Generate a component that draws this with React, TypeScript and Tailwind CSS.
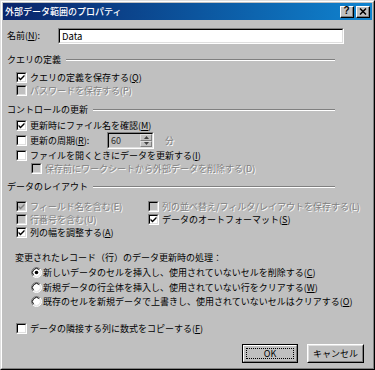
import React from 'react'

const font = '[font-family:"Noto_Sans_CJK_JP","Noto_Sans",sans-serif]'
const dis = 'text-[#808080] [text-shadow:1px_1px_0_#fff]'

type BoxProps = { checked?: boolean; disabled?: boolean }

const CheckBox: React.FC<BoxProps> = ({ checked, disabled }) => (
  <span className="block w-[11px] h-[11px] shrink-0 border border-t-[#808080] border-l-[#808080] border-b-white border-r-white">
    <span
      className={`block w-full h-full border border-t-black border-l-black border-b-[#dfdfdf] border-r-[#dfdfdf] ${
        disabled ? 'bg-[#c0c0c0]' : 'bg-white'
      }`}
    >
      {checked && (
        <svg viewBox="0 0 7 7" className="block w-[7px] h-[7px]">
          <polygon points="0.5,2.5 2.5,4.5 6.5,0.5 6.5,2.5 2.5,6.5 0.5,4.5" fill={disabled ? '#808080' : '#000'} />
        </svg>
      )}
    </span>
  </span>
)

const Radio: React.FC<{ checked?: boolean }> = ({ checked }) => (
  <svg viewBox="0 0 11 11" className="block w-[11px] h-[11px] shrink-0">
    <circle cx="5.5" cy="5.5" r="4.5" fill="#fff" />
    <path d="M1.96 9.04 A5 5 0 0 1 9.04 1.96" stroke="#808080" fill="none" />
    <path d="M9.04 1.96 A5 5 0 0 1 1.96 9.04" stroke="#fff" fill="none" />
    <path d="M2.67 8.33 A4 4 0 0 1 8.33 2.67" stroke="#000" fill="none" />
    <path d="M8.33 2.67 A4 4 0 0 1 2.67 8.33" stroke="#dfdfdf" fill="none" />
    {checked && <circle cx="5.5" cy="5.5" r="1.8" fill="#000" />}
  </svg>
)

const Header: React.FC<{ text: string }> = ({ text }) => (
  <div className="flex items-center w-[328px] h-[14px]">
    <span className="leading-[14px]">{text}</span>
    <div className="flex-1 ml-[5px] h-[2px] border-t border-t-[#808080] border-b border-b-white" />
  </div>
)

const CheckRow: React.FC<{
  checked?: boolean
  disabled?: boolean
  children: React.ReactNode
  className?: string
}> = ({ checked, disabled, children, className }) => (
  <div className={`flex items-center h-[13px] ${className ?? ''}`}>
    <CheckBox checked={checked} disabled={disabled} />
    <span className={`ml-[3px] leading-[13px] whitespace-nowrap ${disabled ? dis : ''}`}>{children}</span>
  </div>
)

const RadioRow: React.FC<{ checked?: boolean; children: React.ReactNode }> = ({ checked, children }) => (
  <div className="flex items-center h-[14px] pl-[24px]">
    <Radio checked={checked} />
    <span className="ml-[1px] leading-[13px] whitespace-nowrap">{children}</span>
  </div>
)

const TitleButton: React.FC<{ children: React.ReactNode }> = ({ children }) => (
  <div className="w-[14px] h-[12px] bg-[#c0c0c0] border border-t-white border-l-white border-b-black border-r-black">
    <div className="w-full h-full border-b border-r border-b-[#808080] border-r-[#808080] flex items-center justify-center">
      {children}
    </div>
  </div>
)

export default function App() {
  return (
    <div className={`w-[375px] h-[370px] bg-[#c0c0c0] text-black text-[9px] ${font}`}>
      <div className="w-full h-full border border-t-[#dfdfdf] border-l-[#dfdfdf] border-b-black border-r-black">
        <div className="w-full h-full border border-t-white border-l-white border-b-[#808080] border-r-[#808080] p-[1px] flex flex-col">
          {/* title bar */}
          <div className="h-[17px] bg-linear-to-r from-[#0a246a] to-[#1084d0] flex items-center pl-[2px] pr-[2px]">
            <span className="text-white font-medium leading-[17px] flex-1">外部データ範囲のプロパティ</span>
            <div className="flex gap-[2px]">
              <TitleButton>
                <span className="text-[10px] font-bold leading-none text-black [font-family:'Liberation_Sans',sans-serif]">?</span>
              </TitleButton>
              <TitleButton>
                <svg viewBox="0 0 8 7" className="w-[8px] h-[7px]">
                  <path d="M1 0.5 L7 6.5 M7 0.5 L1 6.5" stroke="#000" strokeWidth="1.5" />
                </svg>
              </TitleButton>
            </div>
          </div>

          <div className="flex flex-col pl-[4px]">
            {/* name */}
            <div className="flex items-center mt-[8px] h-[16px]">
              <span className="w-[51px] leading-[14px]">
                名前(<u>N</u>):
              </span>
              <div className="w-[286px] h-[16px] border border-t-[#808080] border-l-[#808080] border-b-white border-r-white">
                <div className="w-full h-full border border-t-black border-l-black border-b-[#dfdfdf] border-r-[#dfdfdf] bg-white flex items-center pl-[2px]">
                  <span className="leading-[12px] text-[9.5px]">Data</span>
                </div>
              </div>
            </div>

            <div className="mt-[9px]">
              <Header text="クエリの定義" />
            </div>
            <div className="pl-[9px] flex flex-col">
              <CheckRow checked className="mt-[4px]">
                クエリの定義を保存する(<u>Q</u>)
              </CheckRow>
              <CheckRow disabled>パスワードを保存する(P)</CheckRow>
            </div>

            <div className="mt-[6px]">
              <Header text="コントロールの更新" />
            </div>
            <div className="pl-[9px] flex flex-col">
              <CheckRow checked className="mt-[2px]">
                更新時にファイル名を確認(<u>M</u>)
              </CheckRow>
              <div className="flex items-center h-[17px]">
                <CheckBox />
                <span className="ml-[3px] w-[77px] leading-[13px] whitespace-nowrap">
                  更新の周期(<u>R</u>):
                </span>
                <div className="w-[47px] h-[17px] border border-t-[#808080] border-l-[#808080] border-b-white border-r-white">
                  <div className="w-full h-full border border-t-black border-l-black border-b-[#dfdfdf] border-r-[#dfdfdf] bg-[#c0c0c0] flex">
                    <span className="flex-1 pl-[2px] leading-[13px] text-[#303030]">60</span>
                    <div className="w-[12px] flex flex-col">
                      <div className="flex-1 border border-t-[#dfdfdf] border-l-[#dfdfdf] border-b-[#808080] border-r-[#808080] flex items-center justify-center">
                        <svg viewBox="0 0 5 3" className="w-[5px] h-[3px]">
                          <polygon points="2.5,0 5,3 0,3" fill="#404040" />
                        </svg>
                      </div>
                      <div className="flex-1 border border-t-[#dfdfdf] border-l-[#dfdfdf] border-b-[#808080] border-r-[#808080] flex items-center justify-center">
                        <svg viewBox="0 0 5 3" className="w-[5px] h-[3px]">
                          <polygon points="0,0 5,0 2.5,3" fill="#404040" />
                        </svg>
                      </div>
                    </div>
                  </div>
                </div>
                <span className={`ml-[11px] leading-[13px] ${dis}`}>分</span>
              </div>
              <CheckRow>
                ファイルを開くときにデータを更新する(<u>I</u>)
              </CheckRow>
              <CheckRow disabled className="pl-[15px]">
                保存前にワークシートから外部データを削除する(D)
              </CheckRow>
            </div>

            <div className="mt-[5px]">
              <Header text="データのレイアウト" />
            </div>
            <div className="pl-[9px] mt-[6px] grid grid-cols-[132px_1fr]">
              <CheckRow checked disabled>
                フィールド名を含む(E)
              </CheckRow>
              <CheckRow disabled>列の並べ替え/フィルタ/レイアウトを保存する(L)</CheckRow>
              <CheckRow disabled>行番号を含む(U)</CheckRow>
              <CheckRow checked>
                データのオートフォーマット(<u>S</u>)
              </CheckRow>
              <CheckRow checked>
                列の幅を調整する(<u>A</u>)
              </CheckRow>
            </div>

            <div className="mt-[12px] h-[14px] pl-[8px] flex items-center">
              <span className="leading-[14px]">変更されたレコード（行）のデータ更新時の処理：</span>
            </div>
            <RadioRow checked>
              新しいデータのセルを挿入し、使用されていないセルを削除する(<u>C</u>)
            </RadioRow>
            <div className="mt-[1px]">
              <RadioRow>
                新規データの行全体を挿入し、使用されていない行をクリアする(<u>W</u>)
              </RadioRow>
            </div>
            <RadioRow>
              既存のセルを新規データで上書きし、使用されていないセルはクリアする(<u>O</u>)
            </RadioRow>

            <div className="pl-[9px] mt-[13px]">
              <CheckRow className="h-[14px]">
                データの隣接する列に数式をコピーする(<u>F</u>)
              </CheckRow>
            </div>

            <div className="mt-[9px] flex justify-end gap-[9px] pr-[8px]">
              <div className="w-[56px] h-[19px] border border-black">
                <div className="w-full h-full border border-t-white border-l-white border-b-[#808080] border-r-[#808080] p-[2px]">
                  <div className="w-full h-full border border-dotted border-black flex items-center justify-center">
                    <span className="leading-none">OK</span>
                  </div>
                </div>
              </div>
              <div className="w-[57px] h-[19px] border border-t-white border-l-white border-b-black border-r-black">
                <div className="w-full h-full border border-t-[#dfdfdf] border-l-[#dfdfdf] border-b-[#808080] border-r-[#808080] flex items-center justify-center">
                  <span className="leading-none">キャンセル</span>
                </div>
              </div>
            </div>
          </div>
        </div>
      </div>
    </div>
  )
}
